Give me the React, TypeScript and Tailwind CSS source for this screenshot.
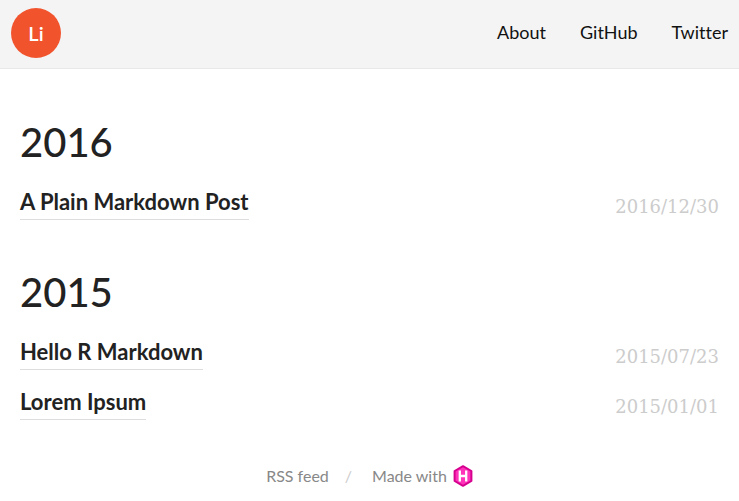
const nav = ["About", "GitHub", "Twitter"];

const archive = [
  { year: "2016", posts: [{ title: "A Plain Markdown Post", date: "2016/12/30" }] },
  {
    year: "2015",
    posts: [
      { title: "Hello R Markdown", date: "2015/07/23" },
      { title: "Lorem Ipsum", date: "2015/01/01" },
    ],
  },
];

function HugoMark() {
  return (
    <svg viewBox="0 0 20 22" className="h-[22px] w-5" role="img" aria-label="Hugo">
      <path d="M10 1.2 18.4 6v10L10 20.8 1.6 16V6Z" fill="#ff33ba" stroke="#d6008f" strokeWidth="2" strokeLinejoin="round" />
      <path d="M6.8 5.5v11M13.2 5.5v11M7 11h6" stroke="#fff" strokeWidth="2.3" fill="none" />
    </svg>
  );
}

export default function App() {
  return (
    <div className="min-h-screen bg-white font-['Lato',sans-serif] text-[#222] [font-variant-ligatures:no-common-ligatures]">
      <header className="flex items-start justify-between border-b border-[#e8e8e8] bg-[#f4f4f4] px-[11px] pt-2 pb-[10px]">
        <a href="#home" className="flex size-[50px] items-center justify-center rounded-full bg-[#f1532c] text-xl font-semibold text-white">Li</a>
        <nav className="flex h-12 items-center gap-[34px] text-lg text-[#111]">
          {nav.map((n) => (
            <a key={n} href="#nav">{n}</a>
          ))}
        </nav>
      </header>
      <main className="flex flex-col gap-[30px] px-5 pt-12 pb-[27px]">
        {archive.map((g) => (
          <section key={g.year}>
            <h1 className="text-[40px] leading-[50px] font-medium">{g.year}</h1>
            <ul className="pt-5">
              {g.posts.map((p) => (
                <li key={p.title} className="flex h-[50px] items-start justify-between">
                  <a href="#post" className="border-b border-[#ddd] pb-[2px] text-[22px] leading-[30px] font-bold">{p.title}</a>
                  <time className="pt-[6px] font-['DejaVu_Serif',serif] text-lg leading-7 text-[#ccc]">{p.date}</time>
                </li>
              ))}
            </ul>
          </section>
        ))}
      </main>
      <footer className="flex items-center justify-center pb-3 text-base text-[#888]">
        <a href="#rss">RSS feed</a>
        <span className="pr-5 pl-4 text-[#ccc]">/</span>
        <a href="#hugo" className="flex items-center gap-[6px]">Made with <HugoMark /></a>
      </footer>
    </div>
  );
}
